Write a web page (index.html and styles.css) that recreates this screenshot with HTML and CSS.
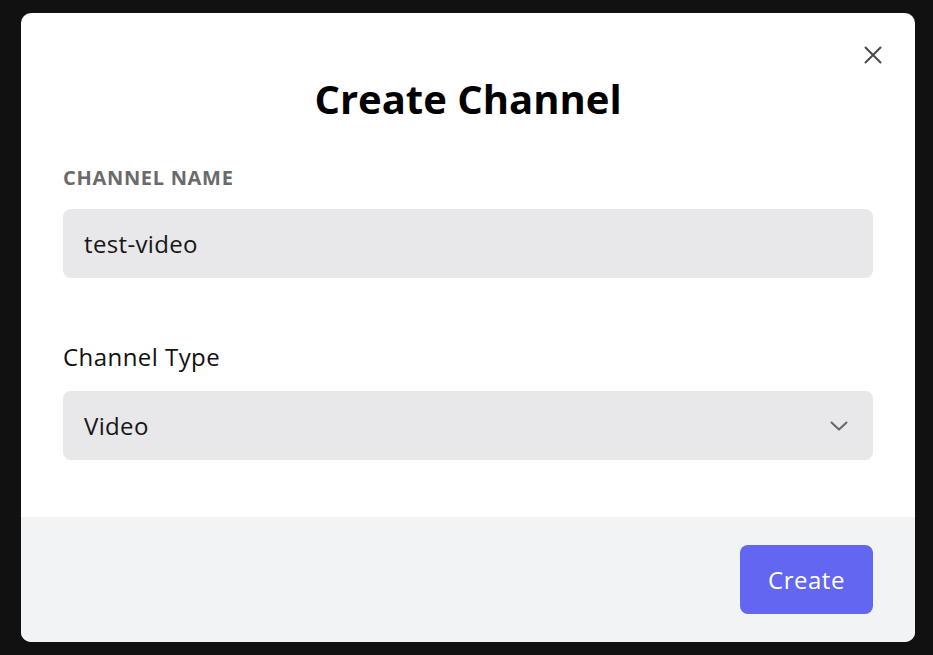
FILE: index.html
```html
<!DOCTYPE html>
<html lang="en">
<head>
<meta charset="utf-8">
<title>Create Channel</title>
<link rel="stylesheet" href="styles.css">
</head>
<body>
<div class="modal">
  <button class="close" aria-label="Close">
    <svg width="18" height="18" viewBox="0 0 18 18"><path d="M1.5 1.5 L16.5 16.5 M16.5 1.5 L1.5 16.5" stroke="#4a4a4a" stroke-width="2" fill="none" stroke-linecap="round"/></svg>
  </button>
  <div class="modal-body">
    <h1 class="title">Create Channel</h1>
    <label class="label-caps">CHANNEL NAME</label>
    <div class="field">test-video</div>
    <label class="label-plain">Channel Type</label>
    <div class="field select">
      <span>Video</span>
      <svg width="18" height="10" viewBox="0 0 18 10"><path d="M1.5 1.5 L9 8.5 L16.5 1.5" stroke="#666" stroke-width="2" fill="none" stroke-linecap="round" stroke-linejoin="round"/></svg>
    </div>
  </div>
  <div class="footer">
    <button class="btn">Create</button>
  </div>
</div>
</body>
</html>
```
FILE: styles.css
```css
html, body { height: 100%; }
body {
  margin: 0;
  background: #121112;
  padding: 13px 18px 13px 21px;
  box-sizing: border-box;
  font-family: "Open Sans", "Noto Sans", sans-serif;
}
.modal {
  position: relative;
  width: 894px;
  height: 629px;
  background: #fff;
  border-radius: 10px;
  overflow: hidden;
  display: flex;
  flex-direction: column;
}
.close {
  position: absolute;
  top: 23px;
  right: 23px;
  width: 38px;
  height: 38px;
  padding: 0;
  border: 0;
  background: transparent;
  display: flex;
  align-items: center;
  justify-content: center;
}
.modal-body {
  flex: 1;
  padding: 66px 42px 0;
  display: flex;
  flex-direction: column;
}
.title {
  margin: 0;
  text-align: center;
  font-size: 40px;
  font-weight: 700;
  line-height: 40px;
  color: #000;
}
.label-caps {
  margin-top: 45px;
  font-size: 20px;
  font-weight: 700;
  line-height: 28px;
  letter-spacing: 0.7px;
  color: #6b6a6b;
}
.field {
  margin-top: 17px;
  height: 69px;
  box-sizing: border-box;
  border-radius: 8px;
  background: #e8e8ea;
  padding: 0 21px;
  display: flex;
  align-items: center;
  font-size: 24px;
  letter-spacing: 0.35px;
  color: #161616;
}
.label-plain {
  margin-top: 63px;
  font-size: 24px;
  line-height: 32px;
  letter-spacing: 0.45px;
  color: #111;
}
.select {
  margin-top: 18px;
  justify-content: space-between;
  padding-right: 25px;
}
.footer {
  height: 125px;
  background: #f2f3f5;
  display: flex;
  align-items: center;
  justify-content: flex-end;
  padding: 0 42px;
}
.btn {
  width: 133px;
  height: 69px;
  border: 0;
  border-radius: 8px;
  background: #6366f1;
  color: #fff;
  font-family: "Open Sans", "Noto Sans", sans-serif;
  font-size: 24px;
  letter-spacing: 0.5px;
}
```
